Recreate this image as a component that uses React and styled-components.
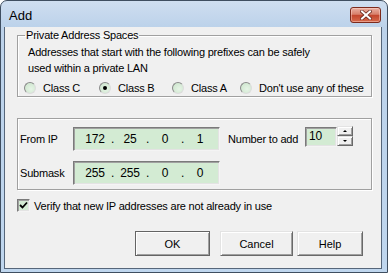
import React from "react";
import styled, { createGlobalStyle, css } from "styled-components";

const GlobalStyle = createGlobalStyle`
  html, body {
    margin: 0;
    padding: 0;
    background: #ffffff;
  }
  body {
    font-family: "Liberation Sans", Arial, sans-serif;
    font-size: 11px;
    color: #000;
  }
`;

const sunken = css`
  border: 1px solid;
  border-color: #7a7a7a #f4f4f4 #f4f4f4 #7a7a7a;
  box-shadow: inset 1px 1px 0 #a0a0a0, inset -1px -1px 0 #e3e3e3;
`;

const raised = css`
  border: 1px solid;
  border-color: #e3e3e3 #696969 #696969 #e3e3e3;
  box-shadow: inset 1px 1px 0 #ffffff, inset -1px -1px 0 #a0a0a0;
`;

const Window = styled.div`
  width: 388px;
  height: 273px;
  box-sizing: border-box;
  border: 1px solid #3f4e60;
  border-radius: 7px 7px 0 0;
  background: linear-gradient(#cfdef0, #bcd2ea 26px, #bfd6ee);
  padding: 0 5px 3px 3px;
  display: flex;
  flex-direction: column;
`;

const TitleBar = styled.div`
  height: 26px;
  display: flex;
  align-items: center;
  justify-content: space-between;
  padding: 2px 0 0 5px;
  box-sizing: border-box;
`;

const Title = styled.span`
  font-size: 13px;
  color: #000;
`;

const CloseButton = styled.div`
  width: 31px;
  height: 16px;
  box-sizing: border-box;
  margin-right: 1px;
  border: 1px solid #7d2a1c;
  border-radius: 3px;
  background: linear-gradient(#eab0a2, #d8806b 45%, #c3462d 52%, #d66a4c);
  box-shadow: inset 0 0 0 1px rgba(255, 220, 210, 0.45);
  display: flex;
  align-items: center;
  justify-content: center;
`;

const Client = styled.div`
  flex: 1;
  background: #f0f0f0;
  border: 1px solid #56667a;
  border-top: none;
  padding: 2px 9px 0 12px;
  display: flex;
  flex-direction: column;
  letter-spacing: -0.2px;
`;

const Group = styled.fieldset`
  margin: 0;
  margin-top: ${(p) => p.$top || 0}px;
  min-width: 0;
  border: 1px solid #a0a0a0;
  box-shadow: inset 1px 1px 0 #ffffff, 1px 1px 0 #ffffff;
  padding: ${(p) => p.$pad};
`;

const Legend = styled.legend`
  font-size: 11px;
  line-height: 12px;
  padding: 0 1px;
  margin-left: 1px;
`;

const Description = styled.p`
  margin: 0;
  padding: 3px 0 0 4px;
  line-height: 16px;
`;

const RadioRow = styled.div`
  display: grid;
  grid-template-columns: 75px 73px 68px auto;
  margin-top: 5px;
  height: 14px;
  align-items: center;
`;

const RadioItem = styled.label`
  display: flex;
  align-items: center;
  gap: 7px;
  white-space: nowrap;
`;

const RadioCircle = styled.span`
  width: 12px;
  height: 12px;
  box-sizing: border-box;
  border-radius: 50%;
  border: 1px solid;
  border-color: #8a8a8a #dcdcdc #dcdcdc #8a8a8a;
  background: radial-gradient(circle at 60% 60%, #e6f4e6, #c9e3c9);
  position: relative;
  flex: none;

  ${(p) =>
    p.$checked &&
    css`
      &::after {
        content: "";
        position: absolute;
        left: 3px;
        top: 3px;
        width: 4px;
        height: 4px;
        border-radius: 50%;
        background: #000;
      }
    `}
`;

const FieldRow = styled.div`
  display: flex;
  align-items: center;

  & + & {
    margin-top: 10px;
  }
`;

const FieldLabel = styled.span`
  width: ${(p) => p.$w}px;
  margin-left: ${(p) => p.$ml || 0}px;
  white-space: nowrap;
`;

const IpBox = styled.div`
  width: 147px;
  height: 24px;
  box-sizing: border-box;
  ${sunken};
  background: #d3ebd3;
  display: flex;
  align-items: center;
  padding-left: 10px;
  font-size: 12px;
`;

const Octet = styled.span`
  width: 22px;
  text-align: center;
`;

const Dot = styled.span`
  width: 13px;
  text-align: center;
`;

const NumberBox = styled.div`
  width: 32px;
  height: 20px;
  box-sizing: border-box;
  ${sunken};
  background: #d3ebd3;
  padding-left: 3px;
  font-size: 12px;
  line-height: 17px;
  align-self: flex-start;
`;

const Spinner = styled.div`
  width: 16px;
  height: 20px;
  display: flex;
  flex-direction: column;
  align-self: flex-start;
  margin-top: -1px;
`;

const SpinButton = styled.div`
  flex: 1;
  box-sizing: border-box;
  ${raised};
  background: #f0f0f0;
  display: flex;
  align-items: center;
  justify-content: center;

  &::after {
    content: "";
    border-left: 2px solid transparent;
    border-right: 2px solid transparent;
    ${(p) =>
      p.$up
        ? "border-bottom: 2px solid #000;"
        : "border-top: 2px solid #000;"}
  }
`;

const CheckRow = styled.label`
  display: flex;
  align-items: center;
  gap: 4px;
  margin-top: 9px;
  height: 13px;
`;

const CheckBox = styled.span`
  width: 13px;
  height: 13px;
  box-sizing: border-box;
  ${sunken};
  background: #d3ebd3;
  display: flex;
  align-items: center;
  justify-content: center;
`;

const ButtonRow = styled.div`
  display: flex;
  justify-content: flex-end;
  margin-top: 19px;
  margin-right: 9px;
`;

const Button = styled.button`
  width: ${(p) => p.$w}px;
  height: 25px;
  margin-left: ${(p) => p.$ml || 0}px;
  box-sizing: border-box;
  background: #f0f0f0;
  font-family: "Liberation Sans", Arial, sans-serif;
  font-size: 11px;
  color: #000;
  padding: 0;
  ${raised};

  ${(p) =>
    p.$default &&
    css`
      border: 1px solid #646464;
    `}
`;

function IpAddress({ parts }) {
  return (
    <IpBox>
      {parts.map((p, i) => (
        <React.Fragment key={i}>
          {i > 0 && <Dot>.</Dot>}
          <Octet>{p}</Octet>
        </React.Fragment>
      ))}
    </IpBox>
  );
}

export default function App() {
  const classes = ["Class C", "Class B", "Class A", "Don't use any of these"];
  return (
    <>
      <GlobalStyle />
      <Window>
        <TitleBar>
          <Title>Add</Title>
          <CloseButton>
            <svg width="12" height="10" viewBox="0 0 12 10">
              <path d="M2 1.5 L10 8.5 M10 1.5 L2 8.5" stroke="#6a2a20" strokeWidth="3.6" strokeLinecap="square" />
              <path d="M2 1.5 L10 8.5 M10 1.5 L2 8.5" stroke="#ffffff" strokeWidth="2" strokeLinecap="square" />
            </svg>
          </CloseButton>
        </TitleBar>
        <Client>
          <Group $pad="0 0 1px 6px">
            <Legend>Private Address Spaces</Legend>
            <Description>
              Addresses that start with the following prefixes can be safely
              <br />
              used within a private LAN
            </Description>
            <RadioRow>
              {classes.map((c) => (
                <RadioItem key={c}>
                  <RadioCircle $checked={c === "Class B"} />
                  {c}
                </RadioItem>
              ))}
            </RadioRow>
          </Group>

          <Group $top={21} $pad="8px 0 4px 2px">
            <FieldRow>
              <FieldLabel $w={53}>From IP</FieldLabel>
              <IpAddress parts={["172", "25", "0", "1"]} />
              <FieldLabel $w={77} $ml={8}>Number to add</FieldLabel>
              <NumberBox>10</NumberBox>
              <Spinner>
                <SpinButton $up />
                <SpinButton />
              </Spinner>
            </FieldRow>
            <FieldRow>
              <FieldLabel $w={53}>Submask</FieldLabel>
              <IpAddress parts={["255", "255", "0", "0"]} />
            </FieldRow>
          </Group>

          <CheckRow>
            <CheckBox>
              <svg width="9" height="9" viewBox="0 0 9 9">
                <path d="M1 4 L3.5 6.5 L8 1.5" stroke="#000" strokeWidth="1.8" fill="none" />
              </svg>
            </CheckBox>
            Verify that new IP addresses are not already in use
          </CheckRow>

          <ButtonRow>
            <Button $w={75} $default>OK</Button>
            <Button $w={73} $ml={10}>Cancel</Button>
            <Button $w={66} $ml={4}>Help</Button>
          </ButtonRow>
        </Client>
      </Window>
    </>
  );
}
